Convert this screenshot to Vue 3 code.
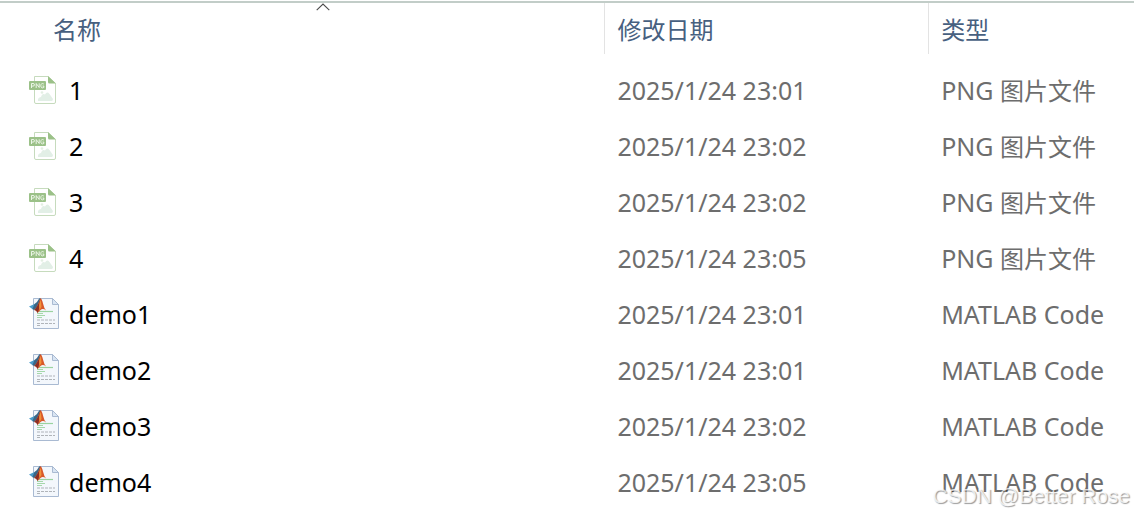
<script setup>
const columns = [
  { key: 'name', label: '名称', sorted: true },
  { key: 'date', label: '修改日期', sorted: false },
  { key: 'type', label: '类型', sorted: false },
]

const files = [
  { name: '1', date: '2025/1/24 23:01', kind: 'png' },
  { name: '2', date: '2025/1/24 23:02', kind: 'png' },
  { name: '3', date: '2025/1/24 23:02', kind: 'png' },
  { name: '4', date: '2025/1/24 23:05', kind: 'png' },
  { name: 'demo1', date: '2025/1/24 23:01', kind: 'matlab' },
  { name: 'demo2', date: '2025/1/24 23:01', kind: 'matlab' },
  { name: 'demo3', date: '2025/1/24 23:02', kind: 'matlab' },
  { name: 'demo4', date: '2025/1/24 23:05', kind: 'matlab' },
]
</script>

<template>
  <main class="explorer">
    <table class="files">
      <colgroup>
        <col class="col-name" />
        <col class="col-date" />
        <col class="col-type" />
      </colgroup>
      <thead>
        <tr>
          <th
            v-for="column in columns"
            :key="column.key"
            scope="col"
            :class="'head-' + column.key"
            :aria-sort="column.sorted ? 'ascending' : undefined"
          >
            <button type="button" class="sort">
              <svg v-if="column.sorted" class="chevron" width="14" height="8" viewBox="0 0 14 8" aria-hidden="true">
                <path d="M0.7 7.2 L7 1 L13.3 7.2" fill="none" stroke="#4a4a4a" stroke-width="1.1" />
              </svg>
              {{ column.label }}
            </button>
          </th>
        </tr>
      </thead>
      <tbody>
        <tr v-for="file in files" :key="file.name">
          <td class="name">
            <div class="entry">
              <svg v-if="file.kind === 'png'" class="icon" width="32" height="32" viewBox="0 0 32 32" aria-hidden="true">
                <path d="M6.5 2.5 H20 L27.500 9.500 V28 Q27.500 29.500 26 29.500 H8 Q6.500 29.500 6.500 28 Z" fill="#fff" stroke="#c6dbbd" />
                <path d="M20 2 L28 9.500 H21.500 Q20 9.500 20 8 Z" fill="#9bc188" />
                <path d="M10 27 Q9.500 23.500 13 23 Q14 19 17 20.500 Q19 17 21.500 20 L25 25 Q25 27 23.500 27 Z" fill="#e2efe6" />
                <circle cx="14" cy="18.500" r="1.300" fill="#e3efe2" />
                <rect x="1" y="7" width="17" height="9" rx="1" fill="#9bc188" />
                <path
                  d="M3.500 14 V9.500 H5 Q6.500 9.500 6.500 10.800 Q6.500 12.100 5 12.100 H3.500 M8.200 14 V9.500 L11.200 13.500 V9.300 M15.800 10 Q13 8.600 12.800 11.700 Q13 14.800 15.800 13.500 V12 H14.500"
                  fill="none" stroke="#f4f9f1" stroke-width="0.9"
                />
              </svg>
              <svg v-else class="icon" width="32" height="32" viewBox="0 1 32 32" aria-hidden="true">
                <path d="M5.500 1.500 H24.500 L30.500 7.500 V31.500 H5.500 Z" fill="#f3f7fc" stroke="#a9bad2" />
                <path d="M24.500 1.500 V7.500 H30.500 Z" fill="#d9e5f3" stroke="#a9bad2" />
                <path d="M9 14.500 H25" stroke="#9ad3a0" stroke-width="1.200" />
                <path d="M9 16.500 H15 M9 18.500 H17 M9 20.500 H14" stroke="#a5d8aa" stroke-width="1.200" />
                <path d="M9 23 H27 M9 26.500 H27 M9 28.500 H12" stroke="#b0b4b9" stroke-width="1.200" stroke-dasharray="3 1" />
                <path d="M1 9.500 L6.500 7 L9 9 L5 12.500 Z" fill="#4a9cca" />
                <path d="M6.500 7 Q9 6 10.500 2.500 Q11.500 0.800 12.500 1 L9 11 L6 13 L4.500 12 Z" fill="#3a6787" />
                <path d="M12.500 1 Q14 2 15 6.500 Q16 11 18 13.500 Q15 11 12.500 13 L9.500 16 Q8.500 13 6 13 Q9 11 12.500 1 Z" fill="#d8582a" />
                <path d="M12.500 1 Q11 7 11 12 L9.500 16 Q8.500 13 6 13 Q9.500 11 12.500 1 Z" fill="#8a2f25" />
                <path d="M12.500 3 Q13.500 6 13.500 10 L11.500 13 Q10.500 7 12.500 3 Z" fill="#f0913a" />
              </svg>
              <span>{{ file.name }}</span>
            </div>
          </td>
          <td>{{ file.date }}</td>
          <td v-if="file.kind === 'png'">PNG <span class="cjk">图片文件</span></td>
          <td v-else>MATLAB Code</td>
        </tr>
      </tbody>
    </table>
    <div class="watermark">CSDN @Better Rose</div>
  </main>
</template>

<style>
body {
  background: #fff;
}
</style>

<style scoped>
.explorer {
  position: relative;
  box-sizing: border-box;
  min-height: 100vh;
  padding-top: 1px;
  overflow: hidden;
  background: #fff;
  font-family: "Noto Sans", "Noto Sans CJK SC", sans-serif;
}

.files {
  width: 100%;
  border-top: 2px solid #c2cdc8;
  border-spacing: 0;
  table-layout: fixed;
}

.col-name {
  width: 53.3%;
}

.col-date {
  width: 28.55%;
}

th {
  height: 59px;
  padding: 0;
  vertical-align: top;
}

.head-name {
  padding-left: 40px;
}

.sort {
  position: relative;
  display: block;
  box-sizing: border-box;
  width: 100%;
  height: 51px;
  margin: 0;
  padding: 0 12px;
  border: 0;
  border-left: 1px solid #e3e3e3;
  background: transparent;
  color: #47607f;
  font-family: "Noto Sans CJK SC", sans-serif;
  font-size: 24px;
  line-height: 50px;
  text-align: left;
}

.head-name .sort {
  border-left-color: transparent;
}

.chevron {
  position: absolute;
  top: 0;
  left: calc(50% - 7px);
}

td {
  height: 56px;
  padding: 0 0 0 13px;
  color: #6d6d6d;
  font-size: 25px;
  line-height: 32px;
  white-space: nowrap;
}

.name {
  padding-left: 28px;
  color: #000;
}

.entry {
  display: flex;
  align-items: center;
  gap: 9px;
}

.icon {
  flex: none;
}

.cjk {
  font-family: "Noto Sans CJK SC", sans-serif;
  font-size: 24px;
}

.watermark {
  position: absolute;
  right: 4px;
  bottom: 8px;
  color: rgba(255, 255, 255, 0.75);
  font-family: "Liberation Sans", Arial, sans-serif;
  font-size: 21px;
  line-height: 24px;
  text-shadow: 1px 1px 1px rgba(0, 0, 0, 0.4);
}
</style>
